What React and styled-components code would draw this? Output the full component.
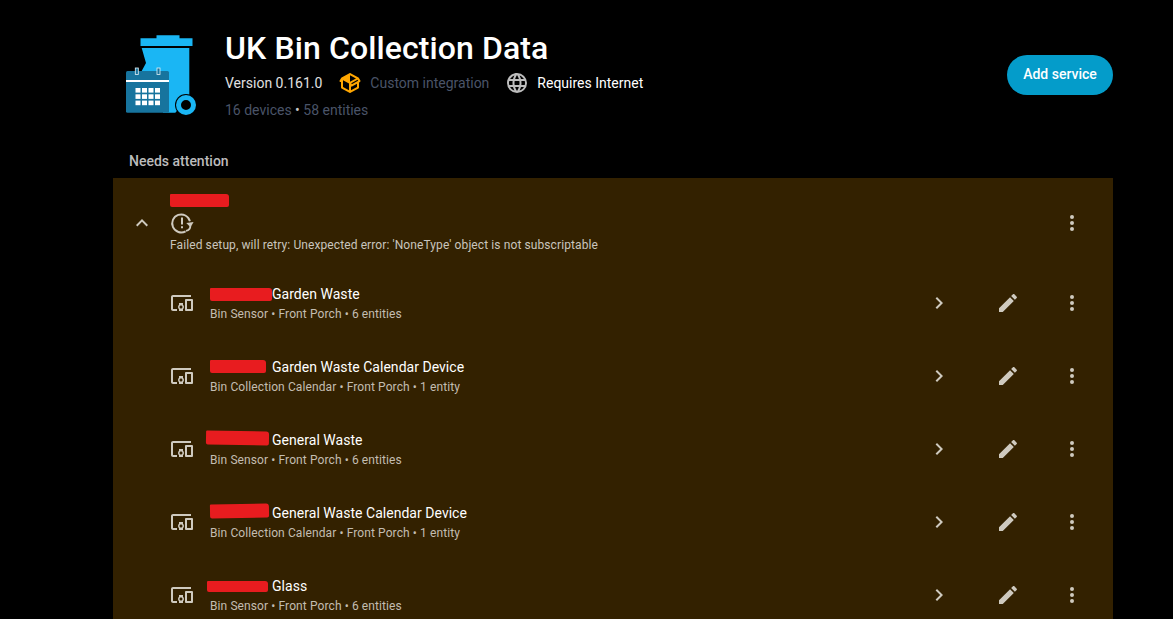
import React from 'react'
import styled, { createGlobalStyle } from 'styled-components'

const Global = createGlobalStyle`
  html, body {
    margin: 0;
    height: 100%;
    overflow: hidden;
    background: #000;
    font-family: Roboto, "Liberation Sans", sans-serif;
  }
`

const mdi = {
  devices: 'M3 6H21V4H3C1.9 4 1 4.9 1 6V18C1 19.1 1.9 20 3 20H7V18H3V6M13 12H9V13.78C8.39 14.33 8 15.11 8 16C8 16.89 8.39 17.67 9 18.22V20H13V18.22C13.61 17.67 14 16.88 14 16S13.61 14.33 13 13.78V12M11 17.5C10.17 17.5 9.5 16.83 9.5 16S10.17 14.5 11 14.5 12.5 15.17 12.5 16 11.83 17.5 11 17.5M22 8H16C15.5 8 15 8.5 15 9V19C15 19.5 15.5 20 16 20H22C22.5 20 23 19.5 23 19V9C23 8.5 22.5 8 22 8M21 18H17V10H21V18Z',
  pencil: 'M20.71,7.04C21.1,6.65 21.1,6 20.71,5.63L18.37,3.29C18,2.9 17.35,2.9 16.96,3.29L15.12,5.12L18.87,8.87M3,17.25V21H6.75L17.81,9.93L14.06,6.18L3,17.25Z',
  dots: 'M12,16A2,2 0 0,1 14,18A2,2 0 0,1 12,20A2,2 0 0,1 10,18A2,2 0 0,1 12,16M12,10A2,2 0 0,1 14,12A2,2 0 0,1 12,14A2,2 0 0,1 10,12A2,2 0 0,1 12,10M12,4A2,2 0 0,1 14,6A2,2 0 0,1 12,8A2,2 0 0,1 10,6A2,2 0 0,1 12,4Z',
  chevronRight: 'M8.59,16.58L13.17,12L8.59,7.41L10,6L16,12L10,18L8.59,16.58Z',
  chevronUp: 'M7.41,15.41L12,10.83L16.59,15.41L18,14L12,8L6,14L7.41,15.41Z',
  web: 'M16.36,14C16.44,13.34 16.5,12.68 16.5,12C16.5,11.32 16.44,10.66 16.36,10H19.74C19.9,10.64 20,11.31 20,12C20,12.69 19.9,13.36 19.74,14M14.59,19.56C15.19,18.45 15.65,17.25 15.97,16H18.92C17.96,17.65 16.43,18.93 14.59,19.56M14.34,14H9.66C9.56,13.34 9.5,12.68 9.5,12C9.5,11.32 9.56,10.65 9.66,10H14.34C14.43,10.65 14.5,11.32 14.5,12C14.5,12.68 14.43,13.34 14.34,14M12,19.96C11.17,18.76 10.5,17.43 10.09,16H13.91C13.5,17.43 12.83,18.76 12,19.96M8,8H5.08C6.03,6.34 7.57,5.06 9.4,4.44C8.8,5.55 8.35,6.75 8,8M5.08,16H8C8.35,17.25 8.8,18.45 9.4,19.56C7.57,18.93 6.03,17.65 5.08,16M4.26,14C4.1,13.36 4,12.69 4,12C4,11.31 4.1,10.64 4.26,10H7.64C7.56,10.66 7.5,11.32 7.5,12C7.5,12.68 7.56,13.34 7.64,14M12,4.03C12.83,5.23 13.5,6.57 13.91,8H10.09C10.5,6.57 11.17,5.23 12,4.03M18.92,8H15.97C15.65,6.75 15.19,5.55 14.59,4.44C16.43,5.07 17.96,6.34 18.92,8M12,2C6.47,2 2,6.5 2,12A10,10 0 0,0 12,22A10,10 0 0,0 22,12A10,10 0 0,0 12,2Z',
  pack: 'M2,10.96C1.5,10.68 1.35,10.07 1.63,9.59L3.13,7C3.24,6.8 3.41,6.66 3.6,6.58L11.43,2.18C11.59,2.06 11.79,2 12,2C12.21,2 12.41,2.06 12.57,2.18L20.47,6.62C20.66,6.72 20.82,6.88 20.91,7.08L22.36,9.6C22.64,10.08 22.47,10.69 22,10.96L21,11.54V16.5C21,16.88 20.79,17.21 20.47,17.38L12.57,21.82C12.41,21.94 12.21,22 12,22C11.79,22 11.59,21.94 11.43,21.82L3.53,17.38C3.21,17.21 3,16.88 3,16.5V10.96C2.7,11.13 2.32,11.14 2,10.96M12,4.15V4.15L12,10.85V10.85L17.96,7.5L12,4.15M5,15.91L11,19.29V12.58L5,9.21V15.91M19,15.91V12.69L14,15.59C13.67,15.77 13.3,15.76 13,15.6V19.29L19,15.91M13.85,13.36L20.13,9.73L19.55,8.72L13.27,12.35L13.85,13.36Z',
}

const Page = styled.div`
  width: 1000px;
  margin-left: 113px;
  height: 619px;
  overflow: hidden;
`

const Header = styled.header`
  display: flex;
  align-items: flex-start;
  height: 135px;
  padding: 28px 0 0 13px;
  box-sizing: border-box;
`

const Logo = styled.svg`
  width: 71px;
  height: 81px;
  margin-top: 7px;
  flex: none;
`

const Info = styled.div`
  margin-left: 28px;
  flex: 1;
`

const Title = styled.h1`
  margin: 0;
  font-size: 32px;
  line-height: 40px;
  font-weight: 500;
  letter-spacing: 0.1px;
  color: #fff;
`

const Meta = styled.div`
  display: flex;
  align-items: center;
  height: 24px;
  margin-top: 3px;
  font-size: 14px;
  color: #e1e1e1;
`

const MetaItem = styled.span`
  display: inline-flex;
  align-items: center;
  gap: 8px;
  margin-left: ${p => p.$gap || 0}px;
  color: ${p => p.$color || '#e1e1e1'};
`

const Counts = styled.div`
  margin-top: 5px;
  font-size: 14px;
  line-height: 20px;
  color: #4a5468;
`

const Dot = styled.span`
  color: #c9c9c9;
`

const AddButton = styled.button`
  width: 106px;
  height: 40px;
  margin-top: 27px;
  padding: 0 0 2px;
  border: 0;
  border-radius: 20px;
  background: #049cca;
  color: #fff;
  font: 500 14px Roboto, sans-serif;
  flex: none;
`

const SectionLabel = styled.h2`
  margin: 0;
  height: 43px;
  padding: 16px 0 0 16px;
  box-sizing: border-box;
  font-size: 14px;
  line-height: 20px;
  font-weight: 500;
  color: #bcbcbc;
`

const Panel = styled.section`
  background: #332100;
`

const Group = styled.div`
  display: grid;
  grid-template-columns: 57px 1fr 24px;
  align-items: center;
  height: 88px;
  padding-right: 29px;
  box-sizing: border-box;
`

const GroupToggle = styled.div`
  display: flex;
  justify-content: center;
  padding: 2px 0 0 1px;
`

const GroupBody = styled.div`
  display: flex;
  flex-direction: column;
`

const GroupName = styled.div`
  height: 20px;
  display: flex;
  align-items: center;
`

const GroupError = styled.div`
  margin: 2px 0 1px;
  font-size: 12px;
  line-height: 16px;
  letter-spacing: 0.1px;
  color: #c9c5bd;
`

const GroupMenu = styled.div`
  padding-top: 2px;
`

const Row = styled.div`
  display: grid;
  grid-template-columns: 24px 1fr 24px 45px 24px 40px 24px;
  align-items: center;
  height: 73px;
  padding: 0 29px 0 57px;
  box-sizing: border-box;
`

const RowText = styled.div`
  padding: 3px 0 0 16px;
`

const RowTitle = styled.div`
  display: flex;
  align-items: center;
  font-size: 14px;
  line-height: 20px;
  letter-spacing: 0.03px;
  color: #fff;
`

const RowSub = styled.div`
  font-size: 12px;
  line-height: 20px;
  letter-spacing: 0.1px;
  color: #c3bdb1;
`

const Redaction = styled.span`
  display: inline-block;
  flex: none;
  width: ${p => p.$width}px;
  height: ${p => p.$height || 13}px;
  margin-left: ${p => p.$shift || 0}px;
  margin-right: ${p => p.$after || 0}px;
  background: #e81c1f;
  border-radius: 1px 3px 2px 2px;
  transform: translateY(${p => p.$lift || 0}px) rotate(${p => p.$tilt || 0}deg);
`

const Glyph = styled.svg`
  width: ${p => p.$size || 24}px;
  height: ${p => p.$size || 24}px;
  display: block;
  fill: ${p => p.$color || '#cfcabf'};
  flex: none;
`

const Icon = ({ path, size, color }) => (
  <Glyph viewBox="0 0 24 24" $size={size} $color={color}><path d={path} /></Glyph>
)

const RetryIcon = () => (
  <Glyph viewBox="0 0 24 24" $color="#cfcabf">
    <path d="M19.9 10.2A9 9 0 1 0 15.6 20.3" fill="none" stroke="#cfcabf" strokeWidth="1.9" />
    <path d="M11 6.500h2v7h-2zM11 15.200h2v2.100h-2z" />
    <path d="M16.400 11.600h7.400l-3.700 4.600z" transform="rotate(-8 20 13)" />
    <path d="M20.400 14.500a5.400 5.400 0 0 1-4.400 5.400" fill="none" stroke="#cfcabf" strokeWidth="1.800" />
  </Glyph>
)

const BinLogo = () => (
  <Logo viewBox="0 0 71 81">
    <path fill="#1ab6f4" d="M30.500 0.300h23v3h13v7.700h-52v-7.700h16z" />
    <path fill="#1ab6f4" d="M15.700 13H63.300V62L49.300 77.700H37V36H15.700L20 28z" />
    <rect x="0" y="36" width="43" height="41.700" rx="1.500" fill="#17749e" />
    <rect x="0" y="45" width="43" height="2" fill="#fff" />
    <rect x="9.300" y="33" width="3" height="6.500" fill="#17749e" stroke="#e4f2f7" strokeWidth="0.800" />
    <rect x="31" y="33" width="3" height="6.500" fill="#17749e" stroke="#e4f2f7" strokeWidth="0.800" />
    {[0, 1, 2].map(r => [0, 1, 2, 3].map(c => (
      <rect key={`${r}-${c}`} x={9.500 + c * 6.500} y={53 + r * 6.300} width="5" height="4.600" fill="#fff" />
    )))}
    <circle cx="60" cy="70" r="11" fill="#000" />
    <circle cx="60" cy="70" r="7.500" fill="none" stroke="#1ab6f4" strokeWidth="5" />
  </Logo>
)

const devices = [
  { name: 'Garden Waste', sub: 'Bin Sensor • Front Porch • 6 entities', red: { $width: 62 } },
  { name: 'Garden Waste Calendar Device', sub: 'Bin Collection Calendar • Front Porch • 1 entity', red: { $width: 56, $after: 6, $lift: -1 } },
  { name: 'General Waste', sub: 'Bin Sensor • Front Porch • 6 entities', red: { $width: 63, $shift: -4, $after: 3, $tilt: 1, $height: 14, $lift: -2 } },
  { name: 'General Waste Calendar Device', sub: 'Bin Collection Calendar • Front Porch • 1 entity', red: { $width: 59, $after: 3, $tilt: -1, $height: 14, $lift: -2 } },
  { name: 'Glass', sub: 'Bin Sensor • Front Porch • 6 entities', red: { $width: 61, $shift: -3, $after: 4, $height: 11 } },
]

export default function App() {
  return (
    <Page>
      <Global />
      <Header>
        <BinLogo />
        <Info>
          <Title>UK Bin Collection Data</Title>
          <Meta>
            <MetaItem>Version 0.161.0</MetaItem>
            <MetaItem $gap={16} $color="#4a5468">
              <Icon path={mdi.pack} color="#ffa600" />
              Custom integration
            </MetaItem>
            <MetaItem $gap={16} $color="#fff">
              <Icon path={mdi.web} color="#bdbdbd" />
              Requires Internet
            </MetaItem>
          </Meta>
          <Counts>16 devices <Dot>•</Dot> 58 entities</Counts>
        </Info>
        <AddButton>Add service</AddButton>
      </Header>
      <SectionLabel>Needs attention</SectionLabel>
      <Panel>
        <Group>
          <GroupToggle><Icon path={mdi.chevronUp} /></GroupToggle>
          <GroupBody>
            <GroupName><Redaction $width={59} /></GroupName>
            <RetryIcon />
            <GroupError>Failed setup, will retry: Unexpected error: 'NoneType' object is not subscriptable</GroupError>
          </GroupBody>
          <GroupMenu><Icon path={mdi.dots} /></GroupMenu>
        </Group>
        {devices.map(d => (
          <Row key={d.name}>
            <Icon path={mdi.devices} />
            <RowText>
              <RowTitle><Redaction {...d.red} />{d.name}</RowTitle>
              <RowSub>{d.sub}</RowSub>
            </RowText>
            <Icon path={mdi.chevronRight} />
            <span />
            <Icon path={mdi.pencil} />
            <span />
            <Icon path={mdi.dots} />
          </Row>
        ))}
      </Panel>
    </Page>
  )
}
